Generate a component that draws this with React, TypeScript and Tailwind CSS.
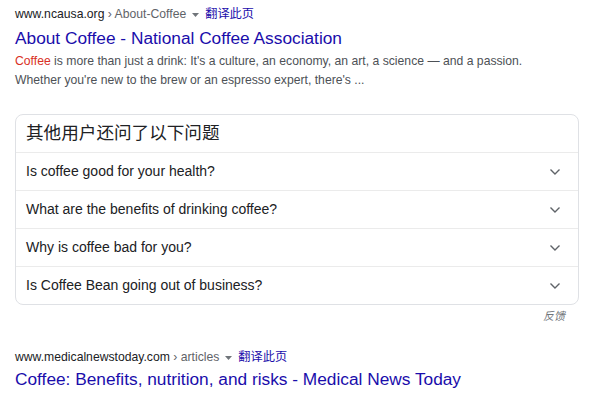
import React from 'react';

const questions = [
  'Is coffee good for your health?',
  'What are the benefits of drinking coffee?',
  'Why is coffee bad for you?',
  'Is Coffee Bean going out of business?',
];

const Chevron = () => (
  <svg width="12" height="8" viewBox="0 0 12 8" fill="none" className="shrink-0">
    <path d="M1.5 1.5L6 6L10.5 1.5" stroke="#5f6368" strokeWidth="1.4" />
  </svg>
);

const Caret = () => (
  <svg width="9" height="6" viewBox="0 0 9 6" className="mx-[5px] mt-[1px]">
    <path d="M1 1h7L4.5 5z" fill="#70757a" />
  </svg>
);

const ResultHeader = ({ site, crumb }: { site: string; crumb: string }) => (
  <div className="flex items-center h-5 text-[12.2px] leading-5">
    <span className="text-[#202124]">{site}</span>
    <span className="text-[#5f6368]">&nbsp;› {crumb}</span>
    <Caret />
    <span className="text-[#1a0dab]">翻译此页</span>
  </div>
);

export default function App() {
  const font = { fontFamily: '"Liberation Sans", Arial, "Noto Sans CJK SC", sans-serif' };
  return (
    <div className="w-[600px] h-[393px] bg-white overflow-hidden pl-[15px] pr-[21px] pt-[4px]" style={font}>
      <ResultHeader site="www.ncausa.org" crumb="About-Coffee" />
      <div className="mt-[2px] text-[17.3px] leading-6 text-[#1a0dab]">
        About Coffee - National Coffee Association
      </div>
      <div className="mt-[2px] text-[12.2px] leading-[19px] text-[#4d5156]">
        <span className="text-[#d93025]">Coffee</span> is more than just a drink: It's a culture, an economy, an art, a
        science — and a passion.
        <br />
        Whether you're new to the brew or an espresso expert, there's ...
      </div>

      <div className="mt-[24px] border border-[#dfe1e5] rounded-lg">
        <div className="h-[37px] flex items-center px-[10px] text-[17.6px] text-[#202124]">
          其他用户还问了以下问题
        </div>
        {questions.map((q) => (
          <div key={q} className="h-[38px] border-t border-[#ebebeb] flex items-center justify-between pl-[10px] pr-[17px] text-[14px] text-[#202124]">
            <span>{q}</span>
            <Chevron />
          </div>
        ))}
      </div>
      <div className="flex justify-end pr-[14px] mt-[3px] text-[11px] italic text-[#70757a] leading-4">反馈</div>

      <div className="mt-[23px]">
        <ResultHeader site="www.medicalnewstoday.com" crumb="articles" />
        <div className="text-[17.3px] leading-6 text-[#1a0dab]">
          Coffee: Benefits, nutrition, and risks - Medical News Today
        </div>
      </div>
    </div>
  );
}
